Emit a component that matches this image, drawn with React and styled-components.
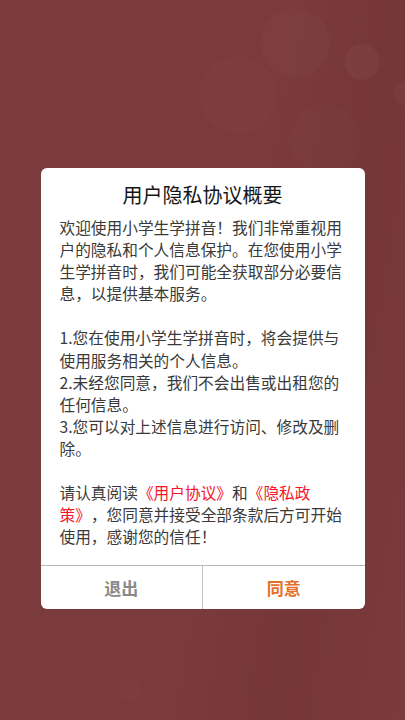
import React from "react";
import styled, { createGlobalStyle } from "styled-components";

const GlobalStyle = createGlobalStyle`
  html, body {
    margin: 0;
    padding: 0;
    background: #7a393b;
  }
  * { box-sizing: border-box; }
`;

const Page = styled.div`
  min-height: 720px;
  display: flex;
  flex-direction: column;
  align-items: center;
  padding-top: 168px;
  font-family: "Noto Sans CJK SC", "Noto Sans", sans-serif;
  background-color: #7b3a3c;
  background-image:
    radial-gradient(circle at 295px 43px, rgba(255, 255, 255, 0.02) 34px, transparent 35px),
    radial-gradient(circle at 362px 62px, rgba(255, 255, 255, 0.03) 17px, transparent 18px),
    radial-gradient(circle at 405px 93px, rgba(255, 255, 255, 0.025) 11px, transparent 12px),
    radial-gradient(circle at 238px 95px, rgba(255, 255, 255, 0.014) 38px, transparent 39px),
    radial-gradient(circle at 325px 140px, rgba(255, 255, 255, 0.012) 35px, transparent 36px),
    radial-gradient(circle at 130px 690px, rgba(255, 255, 255, 0.015) 11px, transparent 12px),
    linear-gradient(100deg, rgba(0, 0, 0, 0) 55%, rgba(40, 0, 5, 0.06) 75%, rgba(0, 0, 0, 0) 100%);
`;

const Dialog = styled.section`
  width: 324px;
  background: #ffffff;
  border-radius: 6px;
  overflow: hidden;
  display: flex;
  flex-direction: column;
`;

const Title = styled.h1`
  margin: 0;
  padding: 14px 0 9px;
  font-size: 20px;
  line-height: 26px;
  font-weight: 400;
  color: #161616;
  text-align: center;
`;

const Body = styled.div`
  padding: 0 19px 17px;
  font-size: 15.7px;
  line-height: 22.1px;
  color: #3a3a3a;
  text-spacing-trim: space-all;
  display: flex;
  flex-direction: column;
  gap: 22.1px;
`;

const Paragraph = styled.p`
  margin: 0;
`;

const Link = styled.span`
  color: #f5152b;
`;

const Actions = styled.div`
  display: flex;
  height: 44px;
  border-top: 1px solid #b8b8b8;
`;

const ActionButton = styled.button`
  flex: 1;
  margin: 0;
  padding: 0;
  border: none;
  border-left: ${(p) => (p.$divided ? "1px solid #c4c4c4" : "none")};
  background: transparent;
  font-family: "Noto Sans CJK SC", "Noto Sans", sans-serif;
  font-size: 17px;
  font-weight: 700;
  color: ${(p) => (p.$primary ? "#e66f2a" : "#8a8a8a")};
  cursor: pointer;
`;

export default function App() {
  return (
    <>
      <GlobalStyle />
      <Page>
        <Dialog>
          <Title>用户隐私协议概要</Title>
          <Body>
            <Paragraph>
              欢迎使用小学生学拼音！我们非常重视用户的隐私和个人信息保护。在您使用小学生学拼音时，我们可能全获取部分必要信息，以提供基本服务。
            </Paragraph>
            <Paragraph>
              1.您在使用小学生学拼音时，将会提供与使用服务相关的个人信息。
              <br />
              2.未经您同意，我们不会出售或出租您的任何信息。
              <br />
              3.您可以对上述信息进行访问、修改及删除。
            </Paragraph>
            <Paragraph>
              请认真阅读<Link>《用户协议》</Link>和<Link>《隐私政策》</Link>，您同意并接受全部条款后方可开始使用，感谢您的信任！
            </Paragraph>
          </Body>
          <Actions>
            <ActionButton>退出</ActionButton>
            <ActionButton $primary $divided>同意</ActionButton>
          </Actions>
        </Dialog>
      </Page>
    </>
  );
}
